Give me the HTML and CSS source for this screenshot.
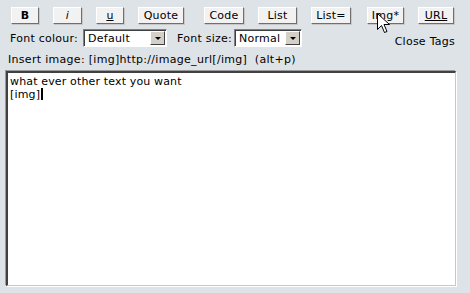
FILE: index.html
```html
<!DOCTYPE html>
<html lang="en">
<head>
    <meta charset="UTF-8">
    <title>Post editor</title>
    <link rel="stylesheet" href="styles.css">
</head>
  <body>
    <main class="editor">

      <div class="buttons">
        <span class="btn btn-b"><b>B</b></span>
        <span class="btn btn-i"><i>i</i></span>
        <span class="btn btn-u"><u>u</u></span>
        <span class="btn btn-quote">Quote</span>
        <span class="btn btn-code">Code</span>
        <span class="btn btn-list">List</span>
        <span class="btn btn-listeq">List=</span>
        <span class="btn btn-img">Img*</span>
        <span class="btn btn-url"><u>URL</u></span>
      </div>

      <div class="options">
        <span class="label">Font colour:</span>
        <span class="select select-colour">
          <span class="value">Default</span>
          <span class="arrow"></span>
        </span>
        <span class="label label-size">Font size:</span>
        <span class="select select-size">
          <span class="value">Normal</span>
          <span class="arrow"></span>
        </span>
        <span class="close-tags">Close Tags</span>
      </div>

      <div class="helpline">Insert image: [img]http://image_url[/img]&nbsp; (alt+p)</div>

      <div class="message">
        <div>what ever other text you want</div>
        <div>[img]<span class="caret"></span></div>
      </div>

    </main>

    <svg class="pointer" width="13" height="21" viewBox="0 0 13 21">
      <path d="M0.5 0.5 L0.5 16.5 L4.5 12.5 L7.5 19.5 L10 18.5 L7 11.5 L12.5 11.5 Z" fill="#fff" stroke="#000" stroke-width="1"/>
    </svg>
  </body>
</html>
```

FILE: styles.css
```css
* {
  margin: 0;
  padding: 0;
  box-sizing: border-box;
}

html {
  background-color: #dee3e7;
  height: 100%;
}

body {
  font-family: "DejaVu Sans", Verdana, sans-serif;
  font-size: 11px;
  letter-spacing: 0.25px;
  color: #000;
  position: relative;
  height: 100%;
}

.editor {
  padding: 7px 14px 8px 6px;
}

.buttons {
  display: flex;
  height: 17px;
  padding-left: 5px;
}

.btn {
  display: flex;
  justify-content: center;
  align-items: center;
  height: 17px;
  margin-right: 14px;
  background-color: #f2f2f2;
  border-top: 1px solid #ffffff;
  border-left: 1px solid #ffffff;
  border-right: 1px solid #6f6f6f;
  border-bottom: 1px solid #6f6f6f;
  box-shadow: 1px 1px 0 #c8c8c8;
  line-height: 1;
}

.btn-b { width: 28px; }
.btn-i { width: 29px; }
.btn-u { width: 28px; }
.btn-quote { width: 46px; margin-right: 20px; }
.btn-code { width: 40px; }
.btn-list { width: 39px; }
.btn-listeq { width: 40px; margin-right: 16px; }
.btn-img { width: 37px; }
.btn-url { width: 36px; margin-right: 0; }

.options {
  display: flex;
  align-items: center;
  height: 18px;
  margin-top: 5px;
  padding-left: 4px;
}

.label {
  margin-right: 5px;
}

.label-size {
  margin-left: 10px;
  margin-right: 2px;
}

.select {
  display: flex;
  align-items: center;
  height: 18px;
  background-color: #fff;
  border-top: 1px solid #808080;
  border-left: 1px solid #808080;
  border-right: 1px solid #ffffff;
  border-bottom: 1px solid #ffffff;
  box-shadow: inset 1px 1px 0 #404040;
  padding: 2px 1px 2px 4px;
}

.select .value {
  flex-grow: 1;
}

.select .arrow {
  position: relative;
  width: 15px;
  height: 14px;
  background-color: #d4d0c8;
  border-top: 1px solid #ffffff;
  border-left: 1px solid #ffffff;
  border-right: 1px solid #404040;
  border-bottom: 1px solid #404040;
}

.select .arrow::after {
  content: "";
  position: absolute;
  left: 4px;
  top: 5px;
  border-left: 3px solid transparent;
  border-right: 3px solid transparent;
  border-top: 3px solid #000;
}

.select-colour { width: 84px; }
.select-size { width: 68px; }

.close-tags {
  margin-left: auto;
  margin-top: 6px;
  margin-right: 1px;
}

.helpline {
  margin-top: 6px;
  padding-left: 2px;
  height: 13px;
  line-height: 13px;
  letter-spacing: 0.3px;
}

.message {
  height: 215px;
  margin-top: 5px;
  padding: 2px 2px;
  background-color: #fff;
  border-top: 2px solid #404040;
  border-left: 2px solid #404040;
  border-right: 1px solid #c8c8c8;
  border-bottom: 1px solid #c8c8c8;
  box-shadow: 1px 1px 0 #ffffff, -1px -1px 0 #9a9a9a;
  line-height: 13px;
  letter-spacing: 0.15px;
}

.caret {
  display: inline-block;
  width: 2px;
  height: 12px;
  margin-left: 1px;
  vertical-align: -2px;
  background-color: #000;
}

.pointer {
  position: absolute;
  left: 377px;
  top: 13px;
}
```
